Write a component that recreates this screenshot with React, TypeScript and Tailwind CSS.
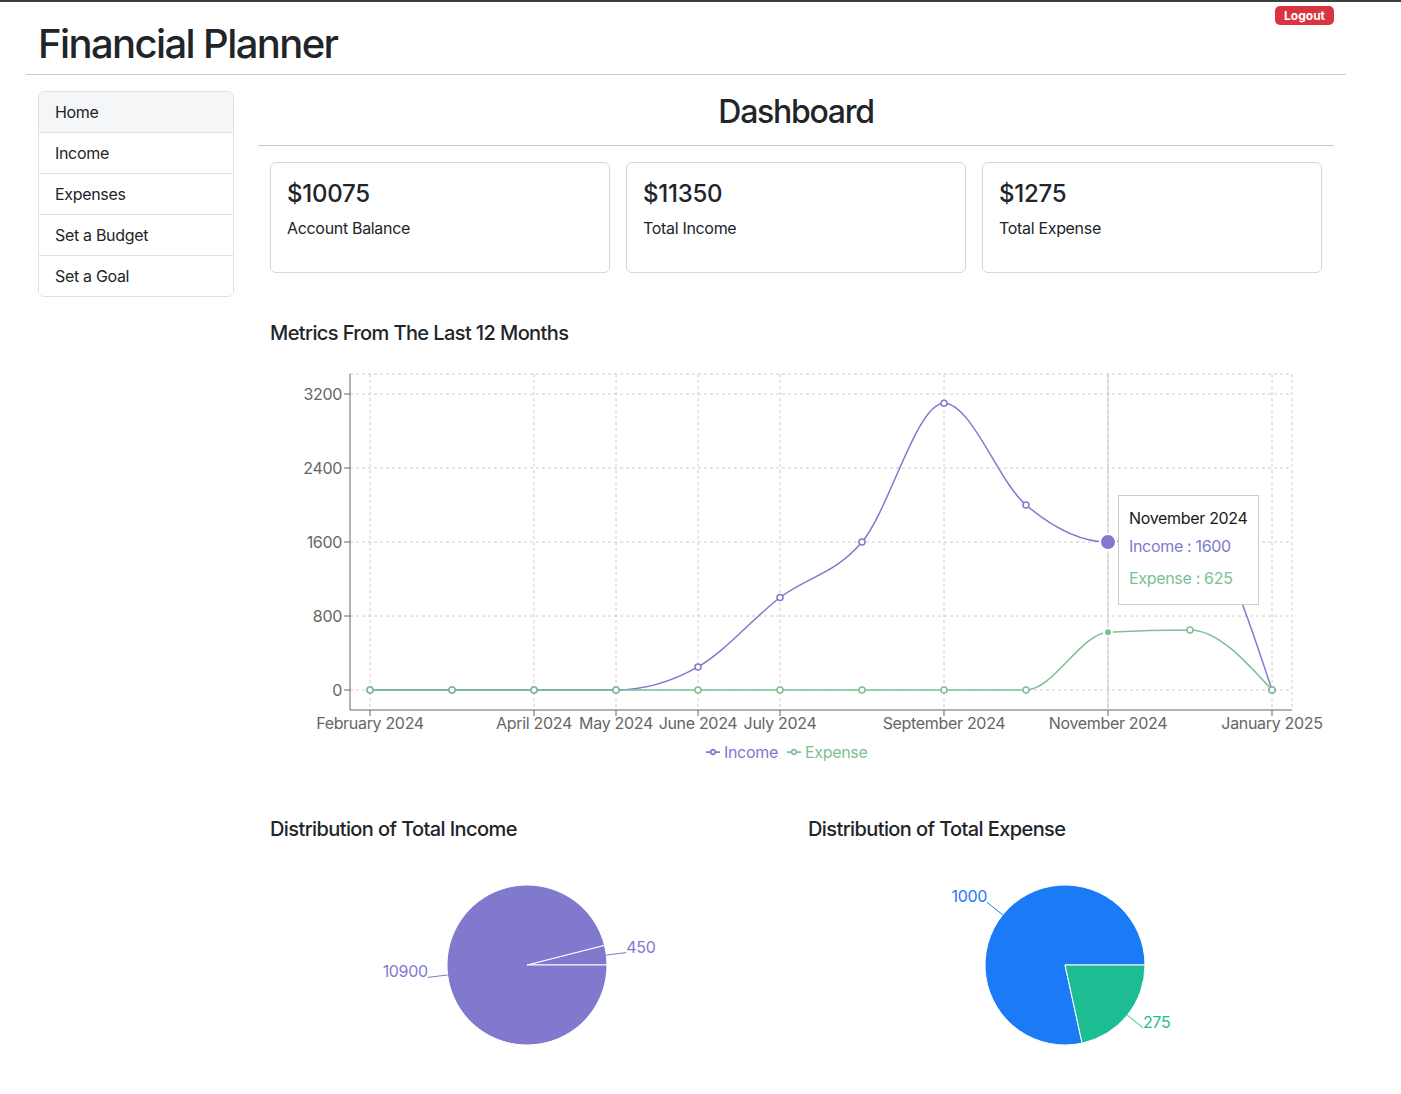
import React from "react";

const PURPLE = "#8079cd";
const GREEN = "#7cc095";

const MONTHS = [
  "February 2024",
  "March 2024",
  "April 2024",
  "May 2024",
  "June 2024",
  "July 2024",
  "August 2024",
  "September 2024",
  "October 2024",
  "November 2024",
  "December 2024",
  "January 2025",
];
const INCOME = [0, 0, 0, 0, 250, 1000, 1600, 3100, 2000, 1600, 1800, 0];
const EXPENSE = [0, 0, 0, 0, 0, 0, 0, 0, 0, 625, 650, 0];
const SHOWN = [0, 2, 3, 4, 5, 7, 9, 11];
const Y_TICKS = [0, 800, 1600, 2400, 3200];

const xAt = (i: number) => 370 + i * 82;
const yAt = (v: number) => 690 - (v * 74) / 800;

// d3 curveMonotoneX, same as recharts type="monotone"
function monotonePath(pts: [number, number][]) {
  const n = pts.length;
  const sign = (x: number) => (x < 0 ? -1 : 1);
  const h: number[] = [];
  const s: number[] = [];
  for (let i = 0; i < n - 1; i++) {
    h.push(pts[i + 1][0] - pts[i][0]);
    s.push((pts[i + 1][1] - pts[i][1]) / h[i]);
  }
  const t: number[] = new Array(n).fill(0);
  for (let i = 1; i < n - 1; i++) {
    const s0 = s[i - 1];
    const s1 = s[i];
    const p = (s0 * h[i] + s1 * h[i - 1]) / (h[i - 1] + h[i]);
    t[i] = (sign(s0) + sign(s1)) * Math.min(Math.abs(s0), Math.abs(s1), 0.5 * Math.abs(p)) || 0;
  }
  t[0] = (3 * s[0] - t[1]) / 2;
  t[n - 1] = (3 * s[n - 2] - t[n - 2]) / 2;
  let d = `M${pts[0][0]},${pts[0][1]}`;
  for (let i = 0; i < n - 1; i++) {
    const [x0, y0] = pts[i];
    const [x1, y1] = pts[i + 1];
    const dx = (x1 - x0) / 3;
    d += `C${x0 + dx},${y0 + dx * t[i]},${x1 - dx},${y1 - dx * t[i + 1]},${x1},${y1}`;
  }
  return d;
}

function LegendIcon({ x, y, color }: { x: number; y: number; color: string }) {
  return (
    <svg x={x} y={y} width={14} height={14} viewBox="0 0 32 32">
      <path
        strokeWidth={4}
        fill="none"
        stroke={color}
        d="M0,16h10.67A5.33,5.33,0,1,1,21.33,16H32M21.33,16A5.33,5.33,0,1,1,10.67,16"
      />
    </svg>
  );
}

function LineChart() {
  const inc = INCOME.map((v, i) => [xAt(i), yAt(v)] as [number, number]);
  const exp = EXPENSE.map((v, i) => [xAt(i), yAt(v)] as [number, number]);
  return (
    <div className="relative mt-[24px] h-[400px] w-[1052px]">
      <svg
        width={1052}
        height={400}
        viewBox="270 369 1052 400"
        className="block overflow-visible"
        style={{ letterSpacing: "-0.02em" }}
      >
        {/* grid */}
        <g stroke="#ccc" strokeDasharray="3 3" fill="none">
          {[374, ...Y_TICKS.map(yAt)].map((y) => (
            <line key={"h" + y} x1={350} x2={1292} y1={y} y2={y} />
          ))}
          {[...SHOWN.map(xAt), 1292].map((x) => (
            <line key={"v" + x} x1={x} x2={x} y1={374} y2={710} />
          ))}
        </g>

        {/* axes */}
        <g stroke="#666" fill="none">
          <line x1={350} x2={350} y1={374} y2={710} />
          <line x1={350} x2={1292} y1={710} y2={710} />
          {Y_TICKS.map((v) => (
            <line key={v} x1={344} x2={350} y1={yAt(v)} y2={yAt(v)} />
          ))}
          {SHOWN.map((i) => (
            <line key={i} x1={xAt(i)} x2={xAt(i)} y1={710} y2={716} />
          ))}
        </g>
        <g fill="#666" fontSize={16}>
          {Y_TICKS.map((v) => (
            <text key={v} x={342} y={yAt(v) + 6} textAnchor="end">
              {v}
            </text>
          ))}
          {SHOWN.map((i) => (
            <text key={i} x={xAt(i)} y={729} textAnchor="middle">
              {MONTHS[i]}
            </text>
          ))}
        </g>

        {/* cursor */}
        <line x1={1108} x2={1108} y1={374} y2={710} stroke="#ccc" />

        {/* lines */}
        <path d={monotonePath(inc)} fill="none" stroke={PURPLE} strokeWidth={1.5} />
        {inc.map(([x, y], i) => (
          <circle key={i} cx={x} cy={y} r={3} fill="#fff" stroke={PURPLE} strokeWidth={1.5} />
        ))}
        <path d={monotonePath(exp)} fill="none" stroke={GREEN} strokeWidth={1.5} />
        {exp.map(([x, y], i) => (
          <circle key={i} cx={x} cy={y} r={3} fill="#fff" stroke={GREEN} strokeWidth={1.5} />
        ))}

        {/* active dots */}
        <circle cx={1108} cy={yAt(1600)} r={8} fill={PURPLE} stroke="#fff" strokeWidth={2} />
        <circle cx={1108} cy={yAt(625)} r={4} fill={GREEN} stroke="#fff" strokeWidth={2} />

        {/* legend */}
        <LegendIcon x={706} y={745} color={PURPLE} />
        <text x={724} y={758} fontSize={16} fill={PURPLE}>
          Income
        </text>
        <LegendIcon x={787} y={745} color={GREEN} />
        <text x={805} y={758} fontSize={16} fill={GREEN}>
          Expense
        </text>
      </svg>

      <div className="absolute left-[848px] top-[126px] whitespace-nowrap border border-[#ccc] bg-white p-[10px] text-[16px] leading-[24px]">
        <p className="text-[#1a1a1a]">November 2024</p>
        <ul>
          <li className="py-[4px] text-[#8079cd]">Income : 1600</li>
          <li className="py-[4px] text-[#7cc095]">Expense : 625</li>
        </ul>
      </div>
    </div>
  );
}

type Slice = { value: number; color: string };

function Pie({ ox, cx, slices }: { ox: number; cx: number; slices: Slice[] }) {
  const cy = 965;
  const r = 80;
  const total = slices.reduce((a, s) => a + s.value, 0);
  const pt = (deg: number, rad: number) => {
    const a = (deg * Math.PI) / 180;
    return [cx + rad * Math.cos(a), cy - rad * Math.sin(a)];
  };
  let start = 0;
  const parts = slices.map((s) => {
    const sweep = (s.value / total) * 360;
    const a0 = start;
    const a1 = start + sweep;
    start = a1;
    const [x0, y0] = pt(a0, r);
    const [x1, y1] = pt(a1, r);
    const d = `M${cx},${cy}L${x0},${y0}A${r},${r},0,${sweep > 180 ? 1 : 0},0,${x1},${y1}Z`;
    const mid = (a0 + a1) / 2;
    const [lx0, ly0] = pt(mid, r);
    const [lx1, ly1] = pt(mid, r + 20);
    return { ...s, d, lx0, ly0, lx1, ly1 };
  });
  return (
    <svg width={514} height={232} viewBox={`${ox} 849 514 232`} className="mt-2 block">
      {parts.map((p, i) => (
        <path key={i} d={p.d} fill={p.color} stroke="#fff" />
      ))}
      {parts.map((p, i) => (
        <g key={"l" + i}>
          <line x1={p.lx0} y1={p.ly0} x2={p.lx1} y2={p.ly1} stroke={p.color} />
          <text
            x={p.lx1}
            y={p.ly1}
            fontSize={16}
            fill={p.color}
            textAnchor={p.lx1 > cx ? "start" : "end"}
          >
            {p.value}
          </text>
        </g>
      ))}
    </svg>
  );
}

const NAV = ["Home", "Income", "Expenses", "Set a Budget", "Set a Goal"];

const CARDS = [
  { amount: "$10075", label: "Account Balance" },
  { amount: "$11350", label: "Total Income" },
  { amount: "$1275", label: "Total Expense" },
];

export default function App() {
  return (
    <div
      className="min-h-screen bg-white tracking-[-0.02em] text-[#212529]"
      style={{ fontFamily: "Inter, 'Noto Sans', sans-serif" }}
    >
      <div className="h-[2px] bg-[#3f3f3f]" />
      <div className="ml-[26px] w-[1320px]">
        <header className="flex items-start justify-between px-3">
          <h1 className="mt-[18px] text-[40px] font-medium leading-[48px] tracking-[-0.04em]">
            Financial Planner
          </h1>
          <button className="mt-[4px] flex h-[19px] items-center rounded-[5px] bg-[#d9343f] px-[9px] text-[12px] font-bold tracking-normal text-white">
            Logout
          </button>
        </header>
        <hr className="mt-[6px] border-t border-[#c8c9ca]" />

        <div className="mt-4 flex">
          <aside className="w-[220px] shrink-0 px-3">
            <div className="overflow-hidden rounded-[6px] border border-[#dee2e6]">
              {NAV.map((n, i) => (
                <div
                  key={n}
                  className={`px-4 py-2 text-[16px] leading-[24px] ${
                    i > 0 ? "h-[41px] border-t border-[#dee2e6] bg-white" : "h-[40px] bg-[#f5f6f8]"
                  }`}
                >
                  {n}
                </div>
              ))}
            </div>
          </aside>

          <main className="w-[1100px] px-3">
            <h2 className="pt-[2px] text-center text-[32px] font-medium leading-[38.4px] tracking-[-0.04em]">
              Dashboard
            </h2>
            <hr className="mt-[14px] border-t border-[#c8c9ca]" />

            <div className="px-3">
              <div className="mt-4 grid grid-cols-3 gap-4">
                {CARDS.map((c) => (
                  <div key={c.label} className="rounded-[6px] border border-[#d6d7d8] p-4">
                    <h4 className="pt-[1px] text-[24px] font-medium leading-[28.8px] tracking-[-0.01em]">
                      {c.amount}
                    </h4>
                    <p className="mb-4 mt-[7px] text-[16px] leading-[24px]">{c.label}</p>
                  </div>
                ))}
              </div>

              <h5 className="mt-[48px] text-[20px] font-medium leading-[24px] tracking-[-0.03em]">
                Metrics From The Last 12 Months
              </h5>
              <LineChart />
            </div>

            <div className="mt-[48px] grid grid-cols-2">
              <div className="px-3">
                <h5 className="text-[20px] font-medium leading-[24px] tracking-[-0.03em]">
                  Distribution of Total Income
                </h5>
                <Pie
                  ox={270}
                  cx={527}
                  slices={[
                    { value: 450, color: "#8079cd" },
                    { value: 10900, color: "#8079cd" },
                  ]}
                />
              </div>
              <div className="px-3">
                <h5 className="text-[20px] font-medium leading-[24px] tracking-[-0.03em]">
                  Distribution of Total Expense
                </h5>
                <Pie
                  ox={808}
                  cx={1065}
                  slices={[
                    { value: 1000, color: "#1b7bf6" },
                    { value: 275, color: "#1dbd94" },
                  ]}
                />
              </div>
            </div>
          </main>
        </div>
      </div>
    </div>
  );
}
